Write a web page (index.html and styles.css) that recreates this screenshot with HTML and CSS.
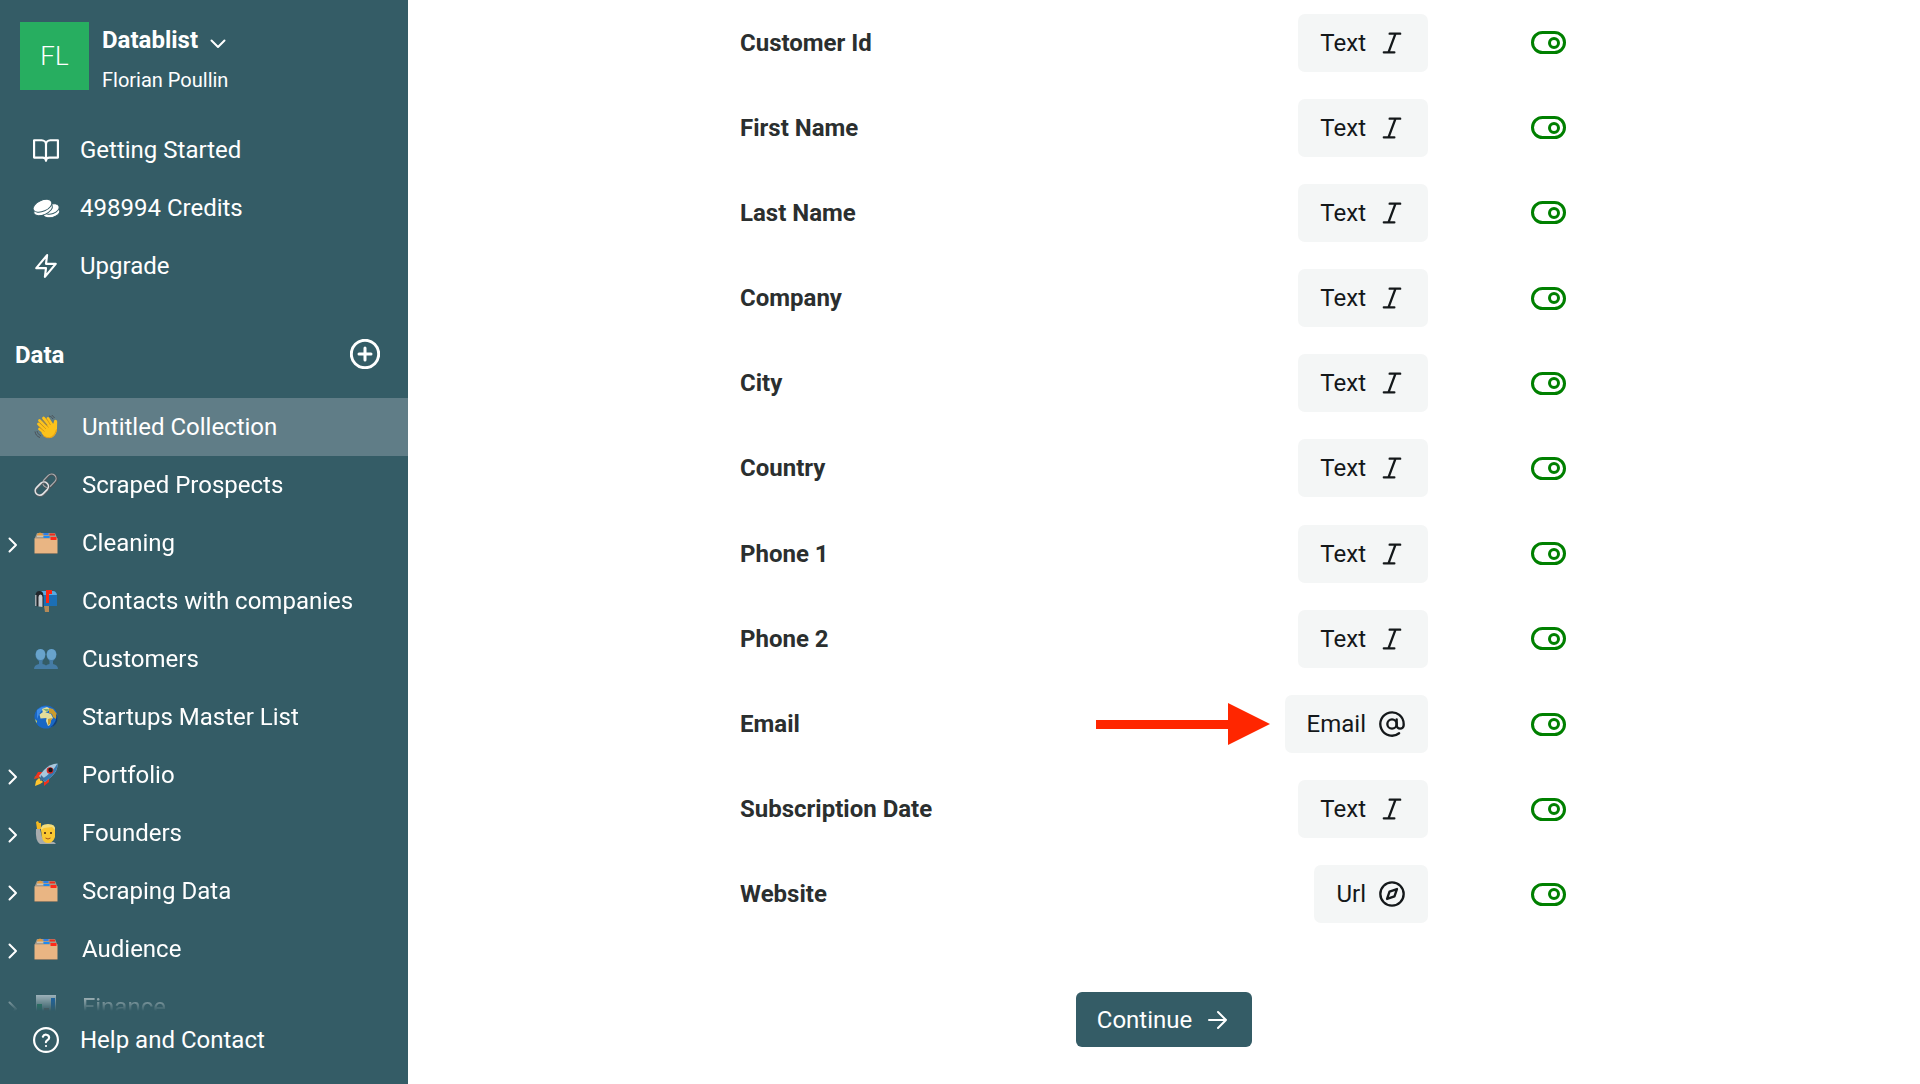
FILE: index.html
```
<!DOCTYPE html>
<html lang="en">
<head>
    <meta charset="UTF-8">
    <meta name="viewport" content="width=device-width, initial-scale=1.0">
    <title>Datablist - Import</title>
    <link rel="stylesheet" href="styles.css">
</head>
<body>
    <!-- Shared icons -->
    <svg class="sprite" aria-hidden="true">
        <symbol id="chevron-right" viewBox="0 0 10 16"><path d="M1.5 1.5 8 8l-6.500 6.500" /></symbol>
        <symbol id="italic" viewBox="0 0 24 24"><path d="M19 4h-9M14 20H5M15 4 9 20" /></symbol>
        <symbol id="folder" viewBox="0 0 24 24">
            <path d="M.5 8 3 2h18l2.500 6z" fill="#a89a88" />
            <path d="M3 4q3-5 6 0v2H3z" fill="#e89a3c" />
            <path d="M9.500 2h5v2h-5z" fill="#2f7fe6" />
            <path d="M15.500 2.500h5.500v2h-5.500z" fill="#f02a1c" />
            <path d="M3 4.500h6.500V6H3z" fill="#c9c4b8" />
            <path d="M9.500 5h6v2h-6z" fill="#1f8af0" />
            <path d="M.5 7.500h23V22H.5z" fill="#e9b583" />
            <path d="M16.500 6h6v3h-6z" fill="#ff2a1a" />
            <path d="M.5 22h23v1H.5z" fill="#8d7c66" />
        </symbol>
    </svg>

    <div class="app">
        <aside class="sidebar">
            <button class="profile" type="button">
                <span class="avatar">FL</span>
                <span class="profile-text">
                    <span class="workspace">Datablist
                        <svg class="chevron-down" viewBox="0 0 16 10"><path d="M1.500 1.500 8 8l6.500-6.500" /></svg>
                    </span>
                    <span class="user">Florian Poullin</span>
                </span>
            </button>

            <nav class="menu">
                <a class="menu-item" href="#">
                    <svg class="icon" viewBox="0 0 24 24"><path d="M1 3h7a4 4 0 0 1 4 4v15a3 3 0 0 0-3-3H1zM23 3h-7a4 4 0 0 0-4 4v15a3 3 0 0 1 3-3h8z" /></svg>
                    Getting Started
                </a>
                <a class="menu-item" href="#">
                    <svg class="icon coins" viewBox="0 0 26 26">
                        <ellipse cx="18.500" cy="18" rx="8.500" ry="4.500" transform="rotate(-14 18.500 18)" />
                        <ellipse cx="18.500" cy="14" rx="8" ry="4.800" transform="rotate(-20 18.500 14)" />
                        <ellipse cx="10" cy="14.500" rx="10" ry="5.300" transform="rotate(-24 10 14.500)" />
                        <ellipse cx="9.500" cy="10.800" rx="10" ry="5.500" transform="rotate(-24 9.500 10.800)" />
                    </svg>
                    498994 Credits
                </a>
                <a class="menu-item" href="#">
                    <svg class="icon" viewBox="0 0 24 24"><path d="M13 2 3 14h9l-1 8 10-12h-9z" /></svg>
                    Upgrade
                </a>
            </nav>

            <div class="section-head">
                <h2>Data</h2>
                <button class="add" type="button" aria-label="Add collection">
                    <svg viewBox="0 0 30 30"><circle cx="15" cy="15" r="13.700" /><path d="M15 9v12M9 15h12" /></svg>
                </button>
            </div>

            <nav class="collections">
                <a class="collection active" href="#">
                    <svg class="emoji" viewBox="0 0 24 24">
                        <path d="M4.500 9 12 16M5.500 5.500 14 14M9.500 3 17 12M14 3.500l4.500 7M5.500 14l6 4.500" stroke="#fcc21b" stroke-width="2.800" stroke-linecap="round" />
                        <path d="M9 13 17 8l1.500 1.500c1.500-1 1-3 2-4.500 1-.9 2.500 0 2.700 1.500L23 14c0 4-3 9-7.500 9-4 0-6.500-3-8-5z" fill="#fcc21b" />
                        <path d="M5.500 7.500 12 14M8 4.500l6.500 8M12.500 3.500l4 6.500M4.500 11.500l6 5" stroke="#cf8a14" stroke-width=".7" />
                        <path d="M9 20.500c6 5 12 1 13.500-6" stroke="#e39a18" fill="none" />
                        <path d="M1 16.500c.5 3 2 5 5 6M3 16c.5 2 1.500 3.500 4 5M15 1c2 .5 3 1.500 4 3M17.500 0c1.500 1 2.500 2 3 3" stroke="#4b5258" fill="none" />
                    </svg>
                    <span class="name">Untitled Collection</span>
                </a>
                <a class="collection" href="#">
                    <svg class="emoji" viewBox="0 0 24 24">
                        <g fill="none" transform="rotate(-46 12 12)">
                            <rect x="10" y="7.500" width="15" height="9" rx="4.500" stroke="#4b4f53" stroke-width="2.400" />
                            <rect x="10" y="7" width="15" height="9" rx="4.500" stroke="#a9adb0" stroke-width="1.200" />
                            <rect x="-1" y="7.500" width="15" height="9" rx="4.500" stroke="#5b5f63" stroke-width="2.600" />
                            <rect x="-1" y="7" width="15" height="9" rx="4.500" stroke="#e2e4e6" stroke-width="1.600" />
                        </g>
                    </svg>
                    <span class="name">Scraped Prospects</span>
                </a>
                <a class="collection" href="#">
                    <svg class="chevron"><use href="#chevron-right" /></svg>
                    <svg class="emoji"><use href="#folder" /></svg>
                    <span class="name">Cleaning</span>
                </a>
                <a class="collection" href="#">
                    <svg class="emoji" viewBox="0 0 24 24">
                        <path d="M10 17h5v6h-4z" fill="#b58a58" />
                        <path d="M5 2h14q4 0 4 5v10H8z" fill="#1c6fb5" />
                        <path d="M6 2h13q3 0 4 4H8z" fill="#58a9e0" />
                        <path d="M1.500 17V7q0-5 4-5t4 5v11z" fill="#22272c" />
                        <path d="M4.500 17.500V8q0-2.500 2-2.500t2 2.500v10z" fill="#c4cace" />
                        <path d="M1 6h1.500v11H1z" fill="#a4abb0" />
                        <path d="M12 1h6v4h-3v9h-3z" fill="#ff2412" />
                    </svg>
                    <span class="name">Contacts with companies</span>
                </a>
                <a class="collection" href="#">
                    <svg class="emoji" viewBox="0 0 24 24">
                        <path d="M0 22q0-4 5-5v-3Q1 11 1.500 7q.5-5 5-5T11.500 7q.3 4-3 7v3q2 .3 3.500 1.500 1.500-1.200 3.500-1.500v-3q-3.500-3-3-7 .5-5 5-5t5 5q.3 4-3.500 7v3q5 1 5 5z" fill="#457ca5" />
                        <ellipse cx="6.500" cy="7.500" rx="4.700" ry="5.500" fill="#68a3cb" />
                        <ellipse cx="17.500" cy="7.500" rx="4.700" ry="5.500" fill="#68a3cb" />
                    </svg>
                    <span class="name">Customers</span>
                </a>
                <a class="collection" href="#">
                    <svg class="emoji" viewBox="0 0 24 24">
                        <circle cx="12" cy="12" r="11.500" fill="#1967c5" />
                        <path d="M3 5q9-7 16 .500Q8-1 3 14z" fill="#3c8be8" />
                        <path d="M8 4l5-2 3 2-3 3-4 1zM5.500 9.500 9 7l5 1 3 1 2 4-2 2-1 5-2 1-2-5 .5-3-6 .500z" fill="#e3dc9a" />
                        <path d="m15 3 4 1 4 5-1 5-3-2-1-3-3-1zM14 14l4-1-2 6-2 1z" fill="#c99b2e" />
                        <path d="m9 4 6 0-2 3z" fill="#7fae72" />
                        <path d="M1 14l2 2 0 2-1-1z" fill="#c7c95a" />
                        <path d="M22 8q2 9-6 14.500 8-2 7.500-11z" fill="#123f77" />
                    </svg>
                    <span class="name">Startups Master List</span>
                </a>
                <a class="collection" href="#">
                    <svg class="chevron"><use href="#chevron-right" /></svg>
                    <svg class="emoji" viewBox="0 0 24 24">
                        <path d="M9 9 4 9 1 14l5 0zM15 15v4l-5 4v-6z" fill="#f3301c" />
                        <path d="m5 15 4 4-3 2-5 2 1-5z" fill="#ffc52e" />
                        <path d="M1 13l6 0-2 2-5 1z" fill="#e0411e" />
                        <path d="M23.500.5Q24 8 17 14l-6 5-6-6 5-6Q16 .5 23.500.500z" fill="#a9c7dc" />
                        <path d="M23.500.5Q24 8 17 14l-6 5-3-3q10-6 15.500-15.500z" fill="#357ab2" />
                        <circle cx="16" cy="7.500" r="3.300" fill="#d32a25" />
                        <circle cx="16.500" cy="7" r="2.200" fill="#17191f" />
                        <path d="m7 12 4 4-5 2z" fill="#426e96" />
                    </svg>
                    <span class="name">Portfolio</span>
                </a>
                <a class="collection" href="#">
                    <svg class="chevron"><use href="#chevron-right" /></svg>
                    <svg class="emoji" viewBox="0 0 24 24">
                        <path d="M2 8h4l2 8 5 5 7 0 2 2H6Q1 20 2 8z" fill="#a7abad" />
                        <path d="M3 8 2 1l2-1 1 2 2 0v6z" fill="#f5b921" />
                        <path d="M7 9q0-5 7-5t7 5v7q-2 6-7 6t-6-6z" fill="#fbc832" />
                        <path d="M7 9q-1-6 7-6 8 0 7 6l-3-3-8 1z" fill="#f3dd7b" />
                        <path d="M10 11h2v2h-2zM16 11h2v2h-2z" fill="#69451c" />
                        <path d="M11.500 17q2.500 2 5 0" stroke="#a8521c" fill="none" />
                    </svg>
                    <span class="name">Founders</span>
                </a>
                <a class="collection" href="#">
                    <svg class="chevron"><use href="#chevron-right" /></svg>
                    <svg class="emoji"><use href="#folder" /></svg>
                    <span class="name">Scraping Data</span>
                </a>
                <a class="collection" href="#">
                    <svg class="chevron"><use href="#chevron-right" /></svg>
                    <svg class="emoji"><use href="#folder" /></svg>
                    <span class="name">Audience</span>
                </a>
                <a class="collection" href="#">
                    <svg class="chevron"><use href="#chevron-right" /></svg>
                    <svg class="emoji" viewBox="0 0 24 24">
                        <path d="M2 0h20v22H2z" fill="#dfe8ee" />
                        <path d="M3 9h5v13H3z" fill="#0ca35c" />
                        <path d="M10 13h5v9h-5z" fill="#e0452c" />
                        <path d="M17 3h4v19h-4z" fill="#0869d8" />
                    </svg>
                    <span class="name">Finance</span>
                </a>
            </nav>

            <div class="sidebar-footer">
                <a class="menu-item" href="#">
                    <svg class="icon" viewBox="0 0 24 24"><circle cx="12" cy="12" r="11" /><path d="M9.100 9a3 3 0 0 1 5.800 1c0 2-3 2.300-3 4M12 17.500h.010" /></svg>
                    Help and Contact
                </a>
            </div>
        </aside>

        <main class="content">
            <form class="mapping">
                <div class="fields">
                    <div class="field">
                        <label for="customer-id">Customer Id</label>
                        <button class="type" type="button">Text <svg><use href="#italic" /></svg></button>
                        <input class="toggle" type="checkbox" id="customer-id" checked>
                    </div>
                    <div class="field">
                        <label for="first-name">First Name</label>
                        <button class="type" type="button">Text <svg><use href="#italic" /></svg></button>
                        <input class="toggle" type="checkbox" id="first-name" checked>
                    </div>
                    <div class="field">
                        <label for="last-name">Last Name</label>
                        <button class="type" type="button">Text <svg><use href="#italic" /></svg></button>
                        <input class="toggle" type="checkbox" id="last-name" checked>
                    </div>
                    <div class="field">
                        <label for="company">Company</label>
                        <button class="type" type="button">Text <svg><use href="#italic" /></svg></button>
                        <input class="toggle" type="checkbox" id="company" checked>
                    </div>
                    <div class="field">
                        <label for="city">City</label>
                        <button class="type" type="button">Text <svg><use href="#italic" /></svg></button>
                        <input class="toggle" type="checkbox" id="city" checked>
                    </div>
                    <div class="field">
                        <label for="country">Country</label>
                        <button class="type" type="button">Text <svg><use href="#italic" /></svg></button>
                        <input class="toggle" type="checkbox" id="country" checked>
                    </div>
                    <div class="field">
                        <label for="phone-1">Phone 1</label>
                        <button class="type" type="button">Text <svg><use href="#italic" /></svg></button>
                        <input class="toggle" type="checkbox" id="phone-1" checked>
                    </div>
                    <div class="field">
                        <label for="phone-2">Phone 2</label>
                        <button class="type" type="button">Text <svg><use href="#italic" /></svg></button>
                        <input class="toggle" type="checkbox" id="phone-2" checked>
                    </div>
                    <div class="field">
                        <label for="email">Email</label>
                        <div class="pointed">
                            <svg class="arrow" viewBox="0 0 174 42"><path d="M0 17h132V0l42 21-42 21V26H0z" /></svg>
                            <button class="type" type="button">Email
                                <svg viewBox="0 0 24 24"><circle cx="12" cy="12" r="4" /><path d="M16 8v5a3 3 0 0 0 6 0v-1a10 10 0 1 0-3.920 7.940" /></svg>
                            </button>
                        </div>
                        <input class="toggle" type="checkbox" id="email" checked>
                    </div>
                    <div class="field">
                        <label for="subscription-date">Subscription Date</label>
                        <button class="type" type="button">Text <svg><use href="#italic" /></svg></button>
                        <input class="toggle" type="checkbox" id="subscription-date" checked>
                    </div>
                    <div class="field">
                        <label for="website">Website</label>
                        <button class="type" type="button">Url
                            <svg viewBox="0 0 24 24"><circle cx="12" cy="12" r="10" /><path d="m16.240 7.760-2.120 6.360-6.360 2.120 2.120-6.360z" /></svg>
                        </button>
                        <input class="toggle" type="checkbox" id="website" checked>
                    </div>
                </div>

                <div class="actions">
                    <button class="continue" type="submit">Continue
                        <svg viewBox="0 0 20 20"><path d="M1 10h17M10 2l8 8-8 8" /></svg>
                    </button>
                </div>
            </form>
        </main>
    </div>
</body>
</html>
```

FILE: styles.css
```
* {
    box-sizing: border-box;
}
body {
    margin: 0;
    font-family: Roboto, "Liberation Sans", sans-serif;
    font-size: 24px;
    line-height: 28px;
    color: #14181a;
    background-color: #ffffff;
}
button {
    font: inherit;
    color: inherit;
    border: 0;
    padding: 0;
    background: none;
    cursor: pointer;
}
a {
    color: inherit;
    text-decoration: none;
}
svg {
    flex: none;
}
.sprite {
    display: none;
}
.app {
    display: flex;
    height: 100vh;
}

/* Sidebar */
.sidebar {
    flex: 0 0 408px;
    display: flex;
    flex-direction: column;
    background-color: #345c66;
    color: #ffffff;
}
.profile {
    display: flex;
    gap: 13px;
    padding: 22px 20px 0;
    text-align: left;
}
.avatar {
    width: 69px;
    height: 68px;
    line-height: 68px;
    text-align: center;
    font-weight: 300;
    font-size: 26px;
    background-color: #27ae60;
}
.profile-text {
    display: flex;
    flex-direction: column;
    gap: 12px;
    padding-top: 4px;
}
.workspace {
    display: flex;
    align-items: center;
    gap: 12px;
    font-weight: 700;
}
.chevron-down {
    width: 16px;
    height: 10px;
    margin-top: 8px;
}
.user {
    font-size: 20px;
}
.chevron-down,
.chevron {
    fill: none;
    stroke: currentColor;
    stroke-width: 2;
    stroke-linecap: round;
    stroke-linejoin: round;
}
.menu {
    padding-top: 27px;
}
.menu-item {
    display: flex;
    align-items: center;
    gap: 21px;
    height: 58px;
    padding-left: 33px;
}
.icon {
    width: 26px;
    height: 26px;
    fill: none;
    stroke: currentColor;
    stroke-width: 2;
    stroke-linecap: round;
    stroke-linejoin: round;
    overflow: visible;
}
.coins {
    fill: currentColor;
    stroke: #345c66;
    stroke-width: 1;
}
.section-head {
    display: flex;
    align-items: center;
    justify-content: space-between;
    padding: 43px 28px 29px 15px;
}
.section-head h2 {
    margin: 0;
    padding-top: 3px;
    font-size: 24px;
    font-weight: 700;
}
.add svg {
    display: block;
    width: 30px;
    height: 30px;
    fill: none;
    stroke: currentColor;
    stroke-width: 3;
    stroke-linecap: round;
}
.collections {
    flex: 1;
    min-height: 0;
    overflow: hidden;
    mask-image: linear-gradient(to top, transparent, black 26px);
}
.collection {
    display: grid;
    grid-template-columns: 26px 24px 1fr;
    align-items: center;
    height: 58px;
    padding-left: 8px;
}
.collection.active {
    background-color: #607d87;
}
.chevron {
    width: 10px;
    height: 16px;
    margin-top: 3px;
}
.emoji {
    grid-column: 2;
    width: 24px;
    height: 24px;
}
.name {
    grid-column: 3;
    padding-left: 24px;
}
.sidebar-footer {
    padding-bottom: 15px;
}

/* Columns mapping */
.content {
    flex: 1;
    min-width: 0;
}
.mapping {
    display: flex;
    flex-direction: column;
    height: 100%;
    max-width: 848px;
    margin: 0 auto;
}
.fields {
    flex: 1;
    display: grid;
    grid-auto-rows: 1fr;
}
.field {
    display: grid;
    grid-template-columns: 1fr auto 80px;
    column-gap: 80px;
    align-items: center;
}
.field label {
    font-weight: 700;
    color: #2b2f2f;
}
.type {
    display: flex;
    align-items: center;
    gap: 12px;
    height: 58px;
    padding: 0 22px;
    border-radius: 7px;
    background-color: #f4f6f6;
}
.type svg {
    width: 28px;
    height: 28px;
    fill: none;
    stroke: currentColor;
    stroke-width: 2;
    stroke-linecap: round;
    stroke-linejoin: round;
}
.toggle {
    appearance: none;
    display: flex;
    align-items: center;
    justify-self: center;
    width: 35px;
    height: 23px;
    margin: 0;
    padding: 0 3px;
    border: 3px solid green;
    border-radius: 12px;
    cursor: pointer;
}
.toggle::before {
    content: "";
    box-sizing: border-box;
    width: 12px;
    height: 12px;
    border: 3px solid green;
    border-radius: 50%;
}
.toggle:checked {
    justify-content: flex-end;
}
.pointed {
    position: relative;
}
.arrow {
    position: absolute;
    right: 100%;
    top: 8px;
    width: 174px;
    height: 42px;
    margin-right: 15px;
    fill: #ff2600;
}
.actions {
    display: flex;
    justify-content: center;
    padding: 55px 0 37px;
}
.continue {
    display: flex;
    align-items: center;
    gap: 16px;
    height: 55px;
    padding: 0 24px 0 21px;
    border-radius: 6px;
    background-color: #345c66;
    color: #ffffff;
}
.continue svg {
    width: 20px;
    height: 20px;
    fill: none;
    stroke: currentColor;
    stroke-width: 2;
    stroke-linecap: round;
    stroke-linejoin: round;
}
```
